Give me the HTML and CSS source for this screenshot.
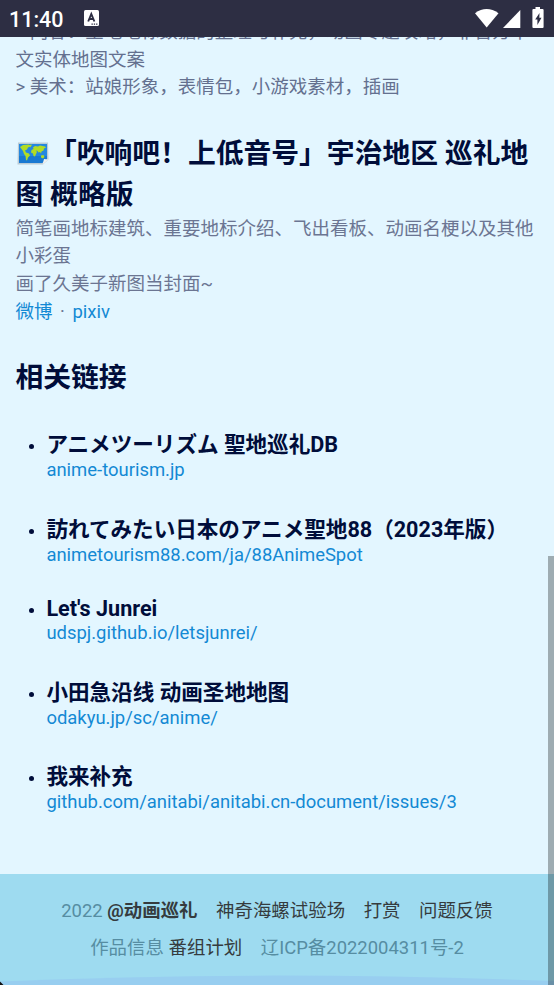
FILE: index.html
```html
<!DOCTYPE html>
<html lang="zh-CN">
<head>
<meta charset="utf-8">
<title>动画巡礼</title>
<link rel="stylesheet" href="styles.css">
</head>
<body>
<div class="screen">
  <header class="status">
    <span class="clock">11:40</span>
    <svg class="app" width="15" height="16" viewBox="0 0 15 16"><rect width="15" height="16" rx="1.5" fill="#fff"/><path d="M4.2 11.5 7.3 4l3.1 7.5M5.4 9h3.8" fill="none" stroke="#2d2e43" stroke-width="1.9"/><path d="M7.5 14.2h1.3m1 0h1.3m1 0h1.3" stroke="#2d2e43" stroke-width="1.2"/></svg>
    <svg class="signals" width="71" height="22" viewBox="0 0 71 22" fill="#fff"><path d="M1 6.2Q12.500-2.200 24.500 6.200L12.700 20.500Z"/><path d="M46.300 3v18H29Z"/><path fill-rule="evenodd" d="M61.500 0h4.500v2h2.600q1 0 1 1v17q0 1-1 1h-9.200q-1 0-1-1V3q0-1 1-1h2.100ZM65.500 6l-4.300 6.600h2.200V18l4.100-7.200h-2.200Z"/></svg>
  </header>
  <main class="content">
    <div class="clip"><p class="text">&gt; 内容：圣地地标数据的整理与补充，动画专题攻略，非官方中<br>文实体地图文案<br>&gt; 美术：站娘形象，表情包，小游戏素材，插画</p></div>
    <h2 class="heading"><svg class="map" width="32" height="23" viewBox="0 0 32 23"><path d="M1 .5h30l.5 17-5.500 5H.5Z" fill="#bacbd5"/><path d="M2 2h28v15l-5 4H2Z" fill="#2588df"/><path d="M2 14h28v3l-5 4H2Z" fill="#1979d2"/><path d="M3 5l3-2 6-.5 1 2-2 1-1 2-2 1 1 2 3 1 1 2-2 2-1 3-1-.5-.5-4L7 12 6 9 4.500 7ZM12 3l3-.5-1 2-1 1ZM16 5.500l2-1.500 3 .5 2-1 5 1 1 1-2 1-.5 2-2 1-.5 2-1-1.500-1.500.5-1-1.500-1.500-.5 1 1.500-1 2-1 2.500-1.500-.5-.5-2.500-2-1 .5-2.500 2-1ZM24 13.500l2.500-.5 1 2-1.500 1.500-2-1Z" fill="#b2dc24"/><path d="M25.500 22.500 27 17l4.500.5Z" fill="#f0f1ef"/></svg>「吹响吧！上低音号」宇治地区 巡礼地<br>图 概略版</h2>
    <p class="text pale">简笔画地标建筑、重要地标介绍、飞出看板、动画名梗以及其他<br>小彩蛋<br>画了久美子新图当封面~<br><a>微博</a><span class="dot">·</span><a>pixiv</a></p>
    <h2 class="heading related">相关链接</h2>
    <ul class="links">
      <li><h3 lang="ja">アニメツーリズム 聖地巡礼DB</h3><a>anime-tourism.jp</a></li>
      <li><h3 lang="ja">訪れてみたい日本のアニメ聖地88（2023年版）</h3><a>animetourism88.com/ja/88AnimeSpot</a></li>
      <li><h3>Let's Junrei</h3><a>udspj.github.io/letsjunrei/</a></li>
      <li><h3>小田急沿线 动画圣地地图</h3><a>odakyu.jp/sc/anime/</a></li>
      <li><h3>我来补充</h3><a>github.com/anitabi/anitabi.cn-document/issues/3</a></li>
    </ul>
  </main>
  <footer class="footer">
    <div class="row"><span>2022 <a class="strong">@动画巡礼</a></span><a>神奇海螺试验场</a><a>打赏</a><a>问题反馈</a></div>
    <div class="row"><span>作品信息 <a>番组计划</a></span><span>辽ICP备2022004311号-2</span></div>
    <svg class="wave" width="554" height="10" viewBox="0 0 554 10"><path d="M0 6.500Q260-5 554 6V10H0Z" fill="#98cef0"/><path d="M0 6.500 3.500 10H0Z" fill="#111"/></svg>
  </footer>
  <div class="scrollbar"></div>
</div>
</body>
</html>
```
FILE: styles.css
```css
* { box-sizing: border-box; }
body { margin: 0; }
h2, h3, p, ul { margin: 0; padding: 0; }
.screen {
  position: relative;
  display: flex;
  flex-direction: column;
  width: 554px;
  height: 985px;
  overflow: hidden;
  background: #e3f6ff;
  color: #000d3a;
  font-family: Roboto, "Noto Sans CJK SC", sans-serif;
  font-size: 18.46px;
}
.status {
  display: flex;
  flex: none;
  align-items: center;
  height: 37px;
  padding: 0 13px 0 9px;
  background: #2d2e43;
  color: #fff;
}
.clock { width: 75px; font-size: 21.5px; font-weight: 500; line-height: 37px; padding-top: 2px; }
.app { margin-top: -1px; }
.signals { margin-left: auto; margin-top: -1px; }
.signals { position: relative; left: 4px; }
.content { flex: none; height: 837px; padding: 0 0 0 15.4px; white-space: nowrap; }
.clip { display: flex; flex-direction: column; justify-content: flex-end; height: 65px; overflow: hidden; }
.text { font-size: 18.5px; line-height: 27.7px; color: #64708f; }
.pale { color: #6b7592; }
.heading { font-size: 27.8px; line-height: 41.5px; font-weight: 700; margin-top: 30.5px; }
.map { margin: 0 0 0 1.500px; vertical-align: -2px; }
.related { margin-top: 30.5px; }
a { color: #1389d4; }
.dot { display: inline-block; width: 20px; text-align: center; }
.links { margin-top: 29px; padding-left: 31px; }
.links li { margin-bottom: 30px; }
.links li::marker { font-size: 16px; }
.links h3 { font-size: 21.58px; font-weight: 700; line-height: normal; padding-bottom: 2px; }
.links a { display: block; line-height: 21.5px; }
[lang="ja"] { font-family: Roboto, "Noto Sans CJK JP", sans-serif; }
.footer {
  position: relative;
  flex: none;
  height: 111px;
  padding-top: 19px;
  background: #9edbf0;
  color: #568da2;
  white-space: nowrap;
}
.row { display: flex; justify-content: center; gap: 18.5px; line-height: 37px; }
.footer a { color: #353b3e; }
.footer .strong { font-weight: 700; }
.wave { position: absolute; left: 0; bottom: 0; }
.scrollbar { position: absolute; right: 0; top: 556px; bottom: 0; width: 6px; background: rgba(0, 0, 0, .3); }
```
